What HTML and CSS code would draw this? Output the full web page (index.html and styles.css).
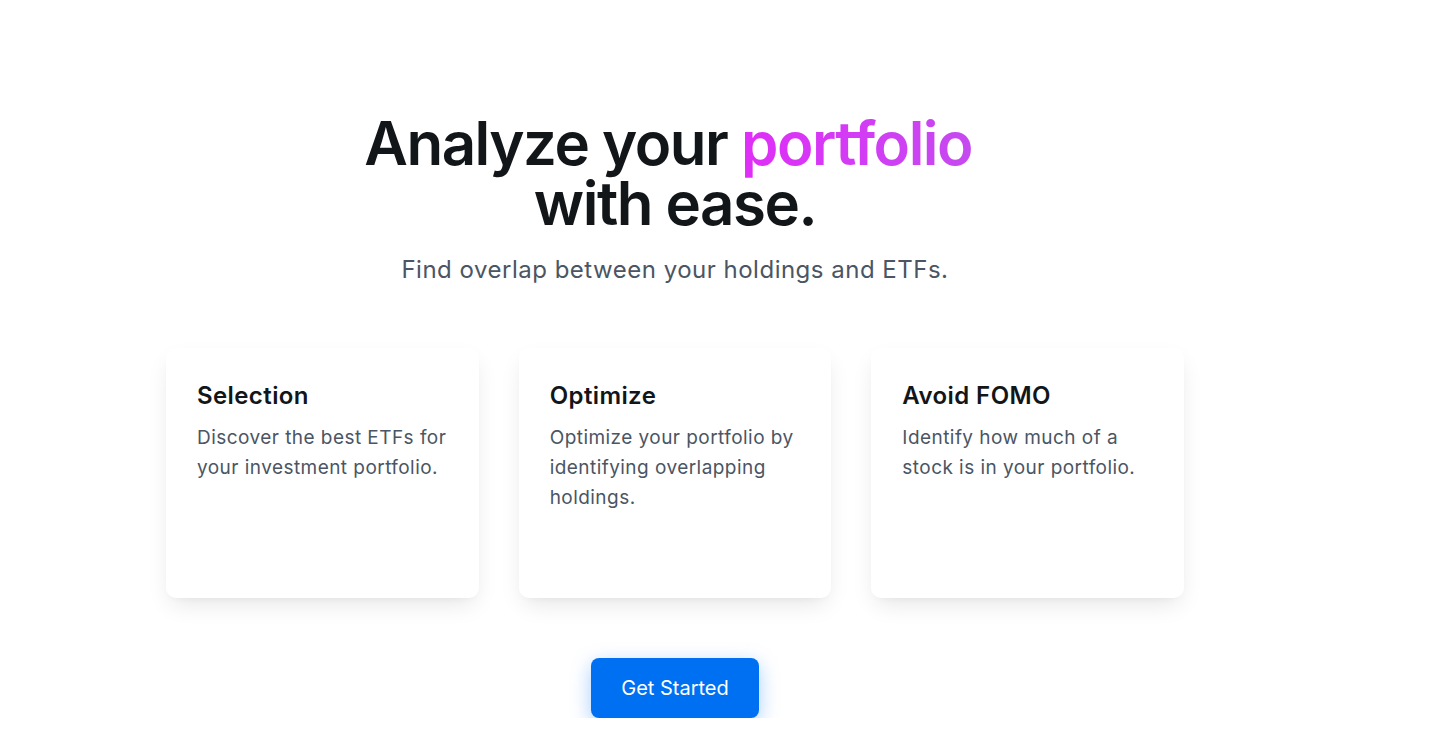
FILE: index.html
```html
<!DOCTYPE html>
<html lang="en">
<head>
<meta charset="utf-8">
<title>Analyze your portfolio</title>
<link rel="stylesheet" href="styles.css">
</head>
<body>
<main class="page">
  <section class="hero">
    <h1 class="hero-title">Analyze your <span class="accent">portfolio</span>&nbsp;<br>with ease.</h1>
    <p class="hero-sub">Find overlap between your holdings and ETFs.</p>
  </section>
  <section class="cards">
    <div class="card">
      <h2 class="card-title">Selection</h2>
      <p class="card-text">Discover the best ETFs for your investment portfolio.</p>
    </div>
    <div class="card">
      <h2 class="card-title">Optimize</h2>
      <p class="card-text">Optimize your portfolio by identifying overlapping holdings.</p>
    </div>
    <div class="card">
      <h2 class="card-title">Avoid FOMO</h2>
      <p class="card-text">Identify how much of a stock is in your portfolio.</p>
    </div>
  </section>
  <div class="actions">
    <a class="btn" href="#">Get Started</a>
  </div>
</main>
</body>
</html>
```
FILE: styles.css
```css
* { box-sizing: border-box; }
html, body { margin: 0; padding: 0; background: #fff; }
body {
  font-family: Inter, "Noto Sans", "Liberation Sans", sans-serif;
  color: #121619;
}
.page {
  width: 1350px;
  padding-top: 113px;
  display: flex;
  flex-direction: column;
  align-items: center;
}
.hero { text-align: center; }
.hero-title {
  margin: 0;
  font-size: 60px;
  line-height: 60px;
  font-weight: 600;
  letter-spacing: -0.025em;
  color: #121619;
}
.accent {
  background: linear-gradient(90deg, #e02ef8, #c54af0);
  -webkit-background-clip: text;
  background-clip: text;
  color: transparent;
}
.hero-sub {
  margin: 21px 0 0;
  font-size: 24px;
  line-height: 32px;
  letter-spacing: 0.5px;
  color: #4b5563;
}
.cards {
  margin-top: 62px;
  width: 1018px;
  display: grid;
  grid-template-columns: repeat(3, 1fr);
  gap: 40px;
}
.card {
  height: 250px;
  padding: 32px 30px 32px 31px;
  background: #fff;
  border-radius: 10px;
  box-shadow: 0 10px 25px -5px rgba(0,0,0,0.11), 0 4px 10px -6px rgba(0,0,0,0.07);
}
.card-title {
  margin: 0;
  font-size: 24px;
  line-height: 32px;
  font-weight: 600;
  letter-spacing: 0.4px;
  color: #121619;
}
.card-text {
  margin: 11px 0 0;
  font-size: 19px;
  line-height: 30px;
  letter-spacing: 0.45px;
  color: #4b5563;
}
.actions { margin-top: 60px; }
.btn {
  display: inline-flex;
  align-items: center;
  justify-content: center;
  width: 168px;
  height: 60px;
  background: #0070f3;
  color: #fff;
  font-size: 20px;
  text-decoration: none;
  border-radius: 8px;
  box-shadow: 0 6px 20px rgba(0, 118, 255, 0.35);
}
```
